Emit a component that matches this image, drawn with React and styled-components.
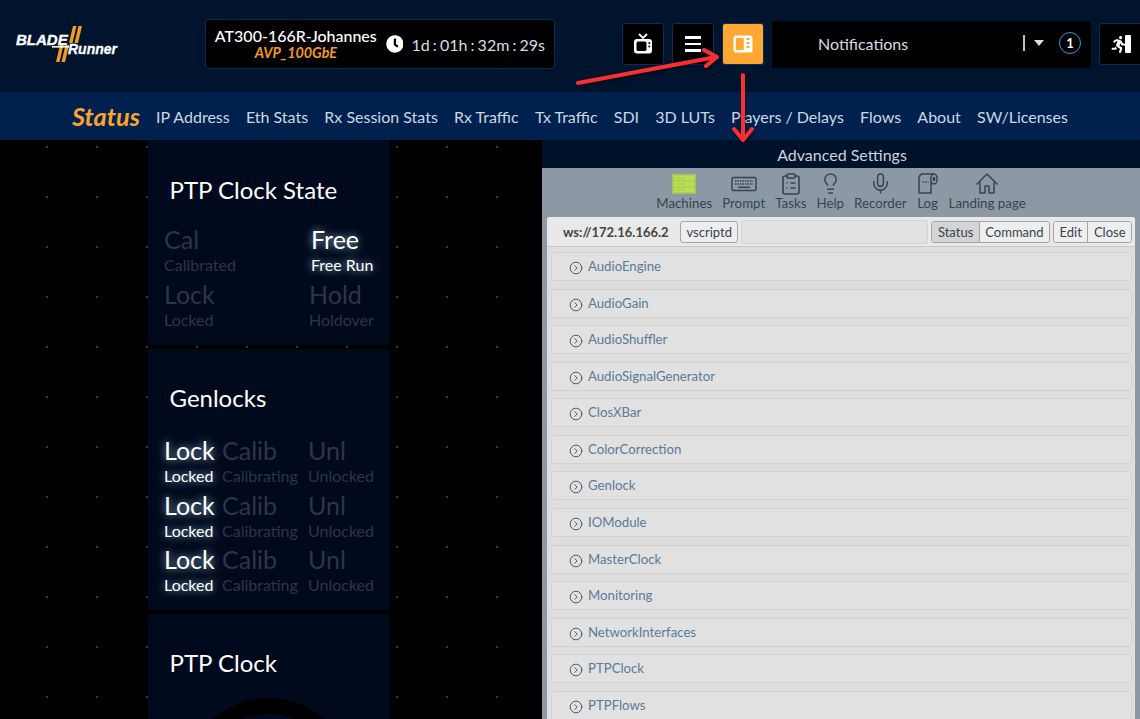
import React from 'react';
import styled, { createGlobalStyle, css } from 'styled-components';
import { CircleChevronRight, ClipboardList, Lightbulb, Mic } from 'lucide-react';
import { FaClock, FaRunning } from 'react-icons/fa';

const NAV_ITEMS = ['IP Address', 'Eth Stats', 'Rx Session Stats', 'Rx Traffic', 'Tx Traffic', 'SDI', '3D LUTs', 'Players / Delays', 'Flows', 'About', 'SW/Licenses'];
const MODULES = ['AudioEngine', 'AudioGain', 'AudioShuffler', 'AudioSignalGenerator', 'ClosXBar', 'ColorCorrection', 'Genlock', 'IOModule', 'MasterClock', 'Monitoring', 'NetworkInterfaces', 'PTPClock', 'PTPFlows'];

function ServerIcon() {
  return (
    <svg width="24" height="20" viewBox="0 0 24 20" fill="none" stroke="#a9cf4e" strokeWidth="1.5">
      <rect x="1" y="1" width="22" height="18" fill="#bfdc5a" />
      <path d="M1 7h22M1 13h22M4 4h10M4 10h10M4 16h10" />
    </svg>
  );
}

function KeyboardIcon() {
  return (
    <svg width="26" height="20" viewBox="0 0 26 20" fill="none" stroke="#37444f">
      <rect x="1" y="3.5" width="24" height="13" rx="1.5" strokeWidth="1.5" />
      <path d="M4 7h18M4 10h18" strokeWidth="1.4" strokeDasharray="1.5 1" />
      <path d="M7 13.3h12" strokeWidth="1.5" />
    </svg>
  );
}

function LogIcon() {
  return (
    <svg width="22" height="22" viewBox="0 0 22 22" fill="none" stroke="#37444f" strokeWidth="1.5">
      <path d="M17 1H6C3.5 1 2 3 2 6v14h12V9" />
      <ellipse cx="17" cy="6" rx="3.2" ry="5" />
      <ellipse cx="17" cy="6" rx="0.7" ry="1.6" />
      <path d="M5.5 9h6" strokeDasharray="1.4 1.2" />
    </svg>
  );
}

function HomeIcon() {
  return (
    <svg width="24" height="24" viewBox="0 0 24 24" fill="none" stroke="#37444f" strokeWidth="1.5" strokeLinejoin="round">
      <path d="M1.5 12.5L12 2l10.5 10.5" />
      <path d="M5 10v11h5v-7h4v7h5V10" />
    </svg>
  );
}

function TvIcon() {
  return (
    <svg width="22" height="22" viewBox="0 0 22 22" fill="none">
      <path d="M7 1l4 4 4-4" stroke="#fff" strokeWidth="1.8" />
      <rect x="2" y="6" width="18" height="14.5" rx="3" fill="#fff" />
      <rect x="4.5" y="8.5" width="10" height="9.5" rx="1.5" fill="#000" />
      <circle cx="17.3" cy="10" r="1" fill="#000" />
      <circle cx="17.3" cy="13.5" r="1" fill="#000" />
    </svg>
  );
}

function PanelIcon() {
  return (
    <svg width="20" height="18" viewBox="0 0 20 18">
      <rect x="0.5" y="0.5" width="19" height="17" rx="2.5" fill="#fff" />
      <rect x="2.8" y="3" width="8" height="12" rx="1" fill="#ffa733" />
      <path d="M13.5 4h3M13.5 8h3M13.5 12h3" stroke="#ffa733" strokeWidth="2" />
    </svg>
  );
}

function LogoMark() {
  return (
    <svg width="104" height="38" viewBox="0 0 104 38">
      <g fill="#f39a24">
        <polygon points="57,0 60.5,0 56.5,17 53,17" />
        <polygon points="62.5,0 66,0 62,17 58.5,17" />
        <polygon points="44,19 47.5,19 43.5,36 40,36" />
        <polygon points="49.5,19 53,19 49,36 45.5,36" />
      </g>
      <text x="0" y="19" fontFamily="'Liberation Sans', sans-serif" fontWeight="700" fontStyle="italic" fontSize="15" stroke="#fff" strokeWidth="0.4" fill="#fff">BLADE</text>
      <rect x="36" y="20" width="17" height="1.6" fill="#fff" />
      <text x="52" y="27.5" fontFamily="'Liberation Sans', sans-serif" fontWeight="700" fontStyle="italic" fontSize="14" stroke="#fff" strokeWidth="0.3" fill="#fff">Runner</text>
    </svg>
  );
}

function Annotations() {
  return (
    <ArrowLayer width="1140" height="719" viewBox="0 0 1140 719" fill="none" stroke="#fb2f33" strokeWidth="4" strokeLinecap="round" strokeLinejoin="round">
      <path d="M578 83L716 57M704 50l13 7-11 9" />
      <path d="M743 75V139M734 129l9 11 9-11" />
    </ArrowLayer>
  );
}

function StateCell({ short, label, on, indent }) {
  return (
    <Cell $indent={indent} $on={on}>
      <CellShort>{short}</CellShort>
      <CellLabel>{label}</CellLabel>
    </Cell>
  );
}

export default function App() {
  return (
    <>
      <GlobalStyle />
      <Page>
        <Header>
          <Logo><LogoMark /></Logo>
          <DeviceBox>
            <DeviceName>
              <strong>AT300-166R-Johannes</strong>
              <em>AVP_100GbE</em>
            </DeviceName>
            <FaClock size={18} color="#fff" />
            <Uptime>1d : 01h : 32m : 29s</Uptime>
          </DeviceBox>
          <HeaderActions>
            <IconButton><TvIcon /></IconButton>
            <IconButton><Burger><i /><i /><i /></Burger></IconButton>
            <IconButton $active><PanelIcon /></IconButton>
            <Notifications>
              <span>Notifications</span>
              <Separator />
              <Caret />
              <Count>1</Count>
            </Notifications>
            <ExitButton>
              <FaRunning size={17} color="#fff" />
              <ExitDoor />
            </ExitButton>
          </HeaderActions>
        </Header>

        <Nav>
          <NavTitle>Status</NavTitle>
          {NAV_ITEMS.map((item) => <NavItem key={item}>{item}</NavItem>)}
        </Nav>

        <Main>
          <CardColumn>
            <Card $height={205}>
              <CardTitle $top={36}>PTP Clock State</CardTitle>
              <ClockGrid>
                <StateCell short="Cal" label="Calibrated" />
                <StateCell short="Free" label="Free Run" on indent={2} />
                <StateCell short="Lock" label="Locked" />
                <StateCell short="Hold" label="Holdover" />
              </ClockGrid>
            </Card>
            <Card $height={261}>
              <CardTitle $top={35}>Genlocks</CardTitle>
              <GenlockGrid>
                {[0, 1, 2].map((row) => (
                  <React.Fragment key={row}>
                    <StateCell short="Lock" label="Locked" on />
                    <StateCell short="Calib" label="Calibrating" />
                    <StateCell short="Unl" label="Unlocked" />
                  </React.Fragment>
                ))}
              </GenlockGrid>
            </Card>
            <Card $height={105}>
              <CardTitle $top={35}>PTP Clock</CardTitle>
              <Gauge width="242" height="40" viewBox="0 0 242 40" fill="none">
                <circle cx="121" cy="85" r="77" stroke="#000" strokeWidth="16" />
              </Gauge>
            </Card>
          </CardColumn>

          <SidePanel>
            <PanelTitle>Advanced Settings</PanelTitle>
            <PanelBody>
              <ToolStrip>
                <Tool><ToolIcon><ServerIcon /></ToolIcon>Machines</Tool>
                <Tool><ToolIcon><KeyboardIcon /></ToolIcon>Prompt</Tool>
                <Tool><ToolIcon><ClipboardList size={24} strokeWidth={1.6} /></ToolIcon>Tasks</Tool>
                <Tool><ToolIcon><Lightbulb size={23} strokeWidth={1.5} /></ToolIcon>Help</Tool>
                <Tool><ToolIcon><Mic size={23} strokeWidth={1.6} /></ToolIcon>Recorder</Tool>
                <Tool><ToolIcon><LogIcon /></ToolIcon>Log</Tool>
                <Tool><ToolIcon><HomeIcon /></ToolIcon>Landing page</Tool>
              </ToolStrip>
              <Inner>
                <InnerBar>
                  <Address>ws://172.16.166.2</Address>
                  <BarButton>vscriptd</BarButton>
                  <BarInput />
                  <BarGroup>
                    <BarButton $joined $pressed>Status</BarButton>
                    <BarButton $joined>Command</BarButton>
                  </BarGroup>
                  <BarGroup>
                    <BarButton $joined>Edit</BarButton>
                    <BarButton $joined>Close</BarButton>
                  </BarGroup>
                </InnerBar>
                <ModuleList>
                  {MODULES.map((name) => (
                    <ModuleRow key={name}>
                      <CircleChevronRight size={14} strokeWidth={1.5} color="#3c4a57" />
                      <span>{name}</span>
                    </ModuleRow>
                  ))}
                </ModuleList>
              </Inner>
            </PanelBody>
          </SidePanel>
        </Main>
        <Annotations />
      </Page>
    </>
  );
}

const GlobalStyle = createGlobalStyle`
  html, body {
    margin: 0;
    height: 100%;
    overflow: hidden;
    background: #000;
    font-family: 'Lato', sans-serif;
  }
`;

const Page = styled.div`
  position: relative;
  width: 1140px;
  height: 719px;
  overflow: hidden;
`;

const ArrowLayer = styled.svg`
  position: absolute;
  top: 0;
  left: 0;
  pointer-events: none;
  filter: drop-shadow(1px 2px 2px rgba(0, 0, 0, 0.45));
`;

const Header = styled.header`
  height: 92px;
  display: flex;
  align-items: center;
  background: #00142e;
  box-sizing: border-box;
`;

const Logo = styled.div`
  width: 205px;
  padding: 0 0 2px 16px;
  box-sizing: border-box;
  display: flex;
`;

const DeviceBox = styled.div`
  width: 350px;
  height: 50px;
  margin-top: -4px;
  box-sizing: border-box;
  display: flex;
  align-items: center;
  padding: 0 9px 0 8px;
  background: #000;
  border: 1px solid #0c2b57;
  border-radius: 3px;
  color: #fff;
`;

const DeviceName = styled.div`
  display: flex;
  flex-direction: column;
  align-items: center;
  width: 165px;
  margin-right: 8px;
  line-height: 17px;

  strong {
    font-size: 16px;
    font-weight: 500;
    white-space: nowrap;
  }

  em {
    font-size: 14.3px;
    font-weight: 700;
    color: #f39a24;
  }
`;

const Uptime = styled.span`
  margin-left: 8px;
  font-size: 16px;
  word-spacing: -1px;
  color: #d7dde3;
  white-space: nowrap;
`;

const HeaderActions = styled.div`
  display: flex;
  align-items: center;
  margin: -4px 0 0 67px;
  gap: 8px;
`;

const IconButton = styled.div`
  width: 42px;
  height: 42px;
  box-sizing: border-box;
  display: flex;
  align-items: center;
  justify-content: center;
  background: #000;
  border: 1px solid #0c2b57;
  border-radius: 3px;

  ${(p) => p.$active && css`
    background: #ffa733;
  `}
`;

const Burger = styled.div`
  display: flex;
  flex-direction: column;
  gap: 4px;

  i {
    display: block;
    width: 16px;
    height: 2.5px;
    background: #fff;
  }
`;

const Notifications = styled.div`
  width: 319px;
  height: 47px;
  box-sizing: border-box;
  display: flex;
  align-items: center;
  padding: 0 0 2px 46px;
  background: #000;
  color: #d7dde3;
  font-size: 16px;

  > span {
    width: 205px;
  }
`;

const Separator = styled.i`
  width: 2px;
  height: 16px;
  background: #bbb;
`;

const Caret = styled.i`
  margin-left: 9px;
  border-left: 5px solid transparent;
  border-right: 5px solid transparent;
  border-top: 6px solid #ddd;
`;

const Count = styled.b`
  width: 22px;
  height: 22px;
  margin-left: 15px;
  box-sizing: border-box;
  display: flex;
  align-items: center;
  justify-content: center;
  border: 1px solid #2a9be0;
  border-radius: 50%;
  font-size: 13px;
  font-weight: 700;
  color: #fff;
`;

const ExitButton = styled(IconButton)`
  width: 44px;
  margin-right: -4px;
  justify-content: flex-start;
  padding-left: 10px;
  flex-shrink: 0;
`;

const ExitDoor = styled.i`
  width: 6px;
  height: 18px;
  margin-left: -2px;
  background: #fff;
  border-radius: 1px;
`;

const Nav = styled.nav`
  height: 48px;
  padding-left: 72px;
  display: flex;
  align-items: center;
  gap: 16.2px;
  background: #00214d;
`;

const NavTitle = styled.span`
  font-size: 25.3px;
  font-weight: 700;
  font-style: italic;
  color: #f9a332;
`;

const NavItem = styled.span`
  font-size: 16px;
  color: #ccd7e2;
  white-space: nowrap;
`;

const Main = styled.main`
  height: 579px;
  display: flex;
  padding-left: 148px;
  background-color: #000;
  background-image: radial-gradient(circle at 1px 1px, #3b3b3b 1px, transparent 1.2px);
  background-size: 50px 50px;
  background-position: 46px 6px;
`;

const CardColumn = styled.div`
  width: 242px;
  margin-right: 152px;
  display: flex;
  flex-direction: column;
  gap: 4px;
  flex-shrink: 0;
`;

const Card = styled.section`
  position: relative;
  height: ${(p) => p.$height}px;
  flex-shrink: 0;
  background: #000a1c;
  border-radius: 2px;
  overflow: hidden;
`;

const CardTitle = styled.h2`
  margin: 0;
  padding: ${(p) => p.$top}px 0 0 21.5px;
  font-size: 24px;
  line-height: 28px;
  font-weight: 400;
  color: #fff;
`;

const ClockGrid = styled.div`
  display: grid;
  grid-template-columns: 145px 1fr;
  row-gap: 3px;
  padding: 21px 0 0 16px;
`;

const GenlockGrid = styled.div`
  display: grid;
  grid-template-columns: 58px 86px 1fr;
  row-gap: 2.5px;
  padding: 24px 0 0 16px;
`;

const Cell = styled.div`
  display: flex;
  flex-direction: column;
  padding-left: ${(p) => p.$indent || 0}px;
  color: #2c3648;

  ${(p) => p.$on && css`
    color: #fff;
    text-shadow: 0 0 8px rgba(190, 220, 255, 0.85);
  `}
`;

const CellShort = styled.span`
  font-size: 25px;
  line-height: 28px;
`;

const CellLabel = styled.span`
  font-size: 16px;
  line-height: 24px;
  white-space: nowrap;
`;

const Gauge = styled.svg`
  position: absolute;
  left: 0;
  top: 84px;
`;

const SidePanel = styled.aside`
  flex: 1;
  display: flex;
  flex-direction: column;
  min-width: 0;
`;

const PanelTitle = styled.div`
  height: 28px;
  line-height: 29px;
  padding-left: 2px;
  text-align: center;
  font-size: 16px;
  color: #ccd3da;
  background: #00112a;
`;

const PanelBody = styled.div`
  flex: 1;
  padding: 0 5px;
  background: #8c99a4;
`;

const ToolStrip = styled.div`
  height: 49px;
  display: flex;
  justify-content: center;
  gap: 10px;
`;

const Tool = styled.div`
  display: flex;
  flex-direction: column;
  align-items: center;
  font-size: 13.3px;
  line-height: 15px;
  color: #37444f;
`;

const ToolIcon = styled.div`
  height: 28px;
  display: flex;
  align-items: center;
  justify-content: center;
  padding-top: 3px;
  box-sizing: border-box;
`;

const Inner = styled.div`
  height: 100%;
  background: #dedede;
  border-radius: 3px 3px 0 0;
`;

const InnerBar = styled.div`
  height: 30px;
  box-sizing: border-box;
  display: flex;
  align-items: center;
  padding: 0 3px 0 16px;
  gap: 3px;
  background: #e9e9e9;
  border-bottom: 1px solid #c8c8c8;
  border-radius: 3px 3px 0 0;
`;

const Address = styled.span`
  width: 112px;
  margin-right: 2px;
  font-size: 13px;
  font-weight: 700;
  color: #444;
`;

const BarButton = styled.div`
  height: 20px;
  padding: 0 5.5px;
  line-height: 20px;
  font-size: 13px;
  color: #37444f;
  background: #eee;
  border: 1px solid #a5a5a5;
  border-radius: 3px;

  ${(p) => p.$joined && css`
    border: none;
    border-radius: 0;
    & + & {
      border-left: 1px solid #a5a5a5;
    }
  `}

  ${(p) => p.$pressed && css`
    background: #d4d4d4;
  `}
`;

const BarInput = styled.div`
  flex: 1;
  height: 22px;
  background: #e2e2e2;
  border: 1px solid #d4d4d4;
  border-radius: 2px;
`;

const BarGroup = styled.div`
  display: flex;
  border: 1px solid #a5a5a5;
  border-radius: 3px;
  overflow: hidden;
`;

const ModuleList = styled.div`
  display: grid;
  grid-auto-rows: 29px;
  row-gap: 7.58px;
  padding: 5px 3px 0 4px;
`;

const ModuleRow = styled.div`
  display: flex;
  align-items: center;
  gap: 5px;
  padding-left: 17px;
  box-sizing: border-box;
  font-size: 13.2px;
  color: #5a7b98;
  background: #e1e1e1;
  border: 1px solid #d2d2d2;
  border-radius: 3px;

  svg {
    margin-top: 3px;
  }

  span {
    margin-top: -1px;
  }
`;
